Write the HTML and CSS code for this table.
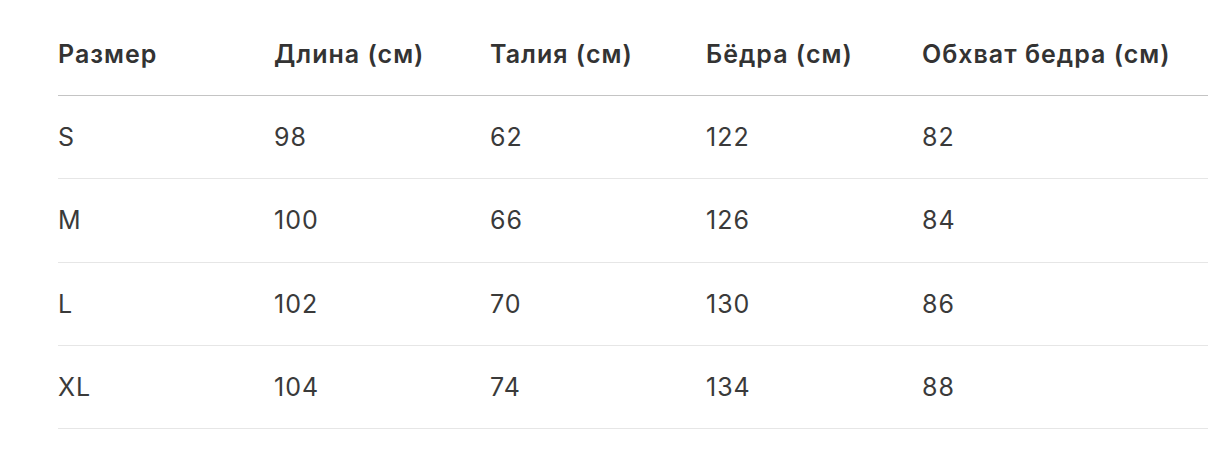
FILE: index.html
```html
<!DOCTYPE html>
<html lang="ru">
<head>
<meta charset="utf-8">
<link rel="stylesheet" href="styles.css">
</head>
<body>
<div class="wrap">
<table class="sizes">
<thead>
<tr><th>Размер</th><th>Длина (см)</th><th>Талия (см)</th><th>Бёдра (см)</th><th>Обхват бедра (см)</th></tr>
</thead>
<tbody>
<tr><td>S</td><td>98</td><td>62</td><td>122</td><td>82</td></tr>
<tr><td>M</td><td>100</td><td>66</td><td>126</td><td>84</td></tr>
<tr><td>L</td><td>102</td><td>70</td><td>130</td><td>86</td></tr>
<tr><td>XL</td><td>104</td><td>74</td><td>134</td><td>88</td></tr>
</tbody>
</table>
</div>
</body>
</html>
```
FILE: styles.css
```css
html, body { margin: 0; padding: 0; background: #fff; }
body { font-family: Inter, "Noto Sans", sans-serif; color: #333; overflow: hidden; }
.wrap { padding: 12px 0 0 58px; }
.sizes { border-collapse: separate; border-spacing: 0; width: 1150px; table-layout: fixed; }
.sizes th, .sizes td { text-align: left; padding: 0; line-height: 24px; width: 216px; white-space: nowrap; letter-spacing: 1px; }
.sizes th:last-child, .sizes td:last-child { width: auto; }
.sizes th { font-size: 25px; font-weight: 600; padding: 30px 0 29px; border-bottom: 1px solid #c4c4c4; color: #333; }
.sizes td { font-size: 25px; font-weight: 400; padding: 29px 0 29.25px; border-bottom: 1px solid #e6e6e6; color: #3a3a3a; }
```
